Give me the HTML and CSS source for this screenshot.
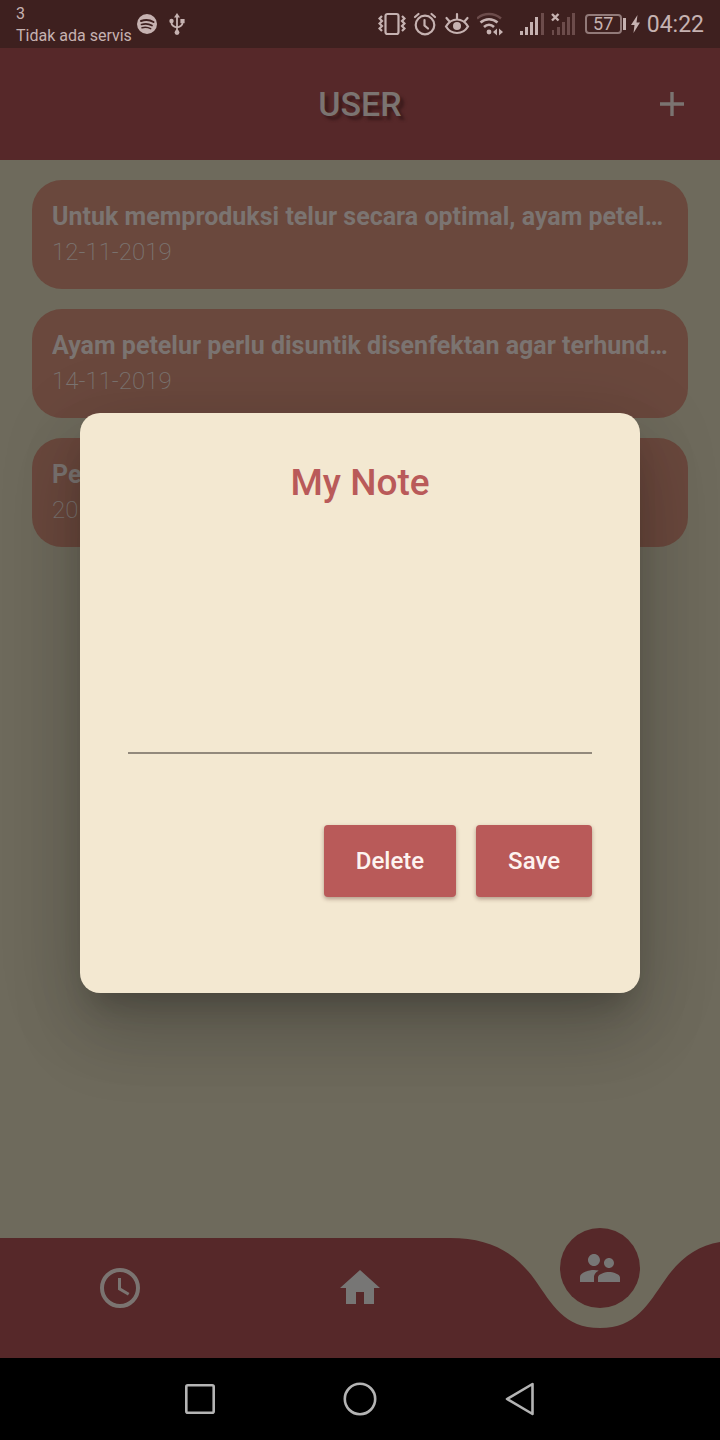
FILE: index.html
```html
<!DOCTYPE html>
<html lang="id">
<head>
<meta charset="utf-8">
<meta name="viewport" content="width=device-width, initial-scale=1">
<title>User</title>
<link rel="stylesheet" href="styles.css">
</head>
<body>
<div class="status">
  <div class="carrier"><span>3</span><span>Tidak ada servis</span></div>
  <svg class="spotify" width="20" height="20" viewBox="0 0 20 20"><circle cx="10" cy="10" r="10" fill="#c6b2b1"/><g fill="none" stroke="#3e201f" stroke-linecap="round"><path d="M4 7C8 5.700 13 6 16.500 8" stroke-width="2"/><path d="M4.500 10.500c3.500-1 7.500-.7 10.500 1.100" stroke-width="1.700"/><path d="M5 13.700c3-.8 6-.5 8.700 1" stroke-width="1.400"/></g></svg>
  <svg class="usb" width="16" height="24" viewBox="0 0 16 24"><g fill="none" stroke="#c6b2b1" stroke-width="1.800"><path d="M8 3v18M2.500 8v3q0 3 5.500 4.500M13.500 8v3q0 3-5.500 4.500"/></g><g fill="#c6b2b1"><path d="M8 1l3 4.500H5z"/><circle cx="2.500" cy="9" r="2.200"/><path d="M11.400 7h4.200v4.200h-4.200z"/><circle cx="8" cy="20.500" r="2.400"/></g></svg>
  <div class="indicators">
    <svg width="28" height="24" viewBox="0 0 28 24" fill="none" stroke="#c6b2b1"><rect x="7.500" y="2" width="13" height="20" rx="2" stroke-width="2.200"/><path d="M4 4L1.500 6.500 4 9 1.500 11.500 4 14 1.500 16.500 4 19M24 4l2.500 2.500L24 9l2.500 2.500L24 14l2.500 2.500L24 19" stroke-width="2.200"/></svg>
    <svg width="24" height="24" viewBox="0 0 24 24" fill="none" stroke="#c6b2b1" stroke-width="2.200" stroke-linecap="round"><circle cx="12" cy="13" r="9.300"/><path d="M2 5l3.500-3M22 5l-3.500-3M11.500 8v5.500l3.500 3"/></svg>
    <svg width="26" height="24" viewBox="0 0 26 24" fill="none" stroke="#c6b2b1" stroke-width="2.200" stroke-linecap="round"><path d="M2 14.500C5 9.500 9 7.500 13 7.500s8 2 11 7c-3 5-7 6.500-11 6.500S5 19.500 2 14.500zM13 7V2M5.500 9.500l-3-3.500M20.500 9.500l3-3.500"/><circle cx="13" cy="14" r="4" fill="#c6b2b1" stroke="none"/></svg>
    <svg width="28" height="24" viewBox="0 0 28 24" fill="none" stroke="#c6b2b1" stroke-width="2.500"><path d="M0 6.500C7 .6 17 .6 24 6.500" stroke="#6c4c4b"/><path d="M3.500 10.500c5-4.500 12-4.500 17 0M7 15c3-3 7-3 10 0"/><circle cx="12" cy="20" r="2.400" fill="#c6b2b1" stroke="none"/><path d="M16 20l4-3.500v7zM22 16.500l4 3.500-4 3.500z" fill="#c6b2b1" stroke="none"/></svg>
    <svg class="signal" width="24" height="24" viewBox="0 0 24 24" fill="#c6b2b1"><path d="M0 19h3v4H0zM5 15h3v8H5zM10 10h3v13h-3zM15 5h3v18h-3z"/><path d="M21 1h3v22h-3z" fill="#6c4c4b"/></svg>
    <svg width="24" height="24" viewBox="0 0 24 24"><path d="M1 18h2v5H1zM6 15h3v8H6zM11 10h3v13h-3zM16 5h3v18h-3zM21 1h3v22h-3z" fill="#6c4c4b"/><path d="M1 2l6.500 6.500M7.500 2L1 8.500" stroke="#c6b2b1" stroke-width="2.400"/></svg>
    <div class="battery"><span>57</span></div>
    <svg class="bolt" width="9" height="18" viewBox="0 0 9 18"><path d="M6.500 0L0 10h3.500L2.500 18 9 7.500H5.500z" fill="#c6b2b1"/></svg>
    <time>04:22</time>
  </div>
</div>

<div class="app">
  <header class="topbar">
    <h1>USER</h1>
    <button class="add" aria-label="Tambah"><svg width="24" height="24" viewBox="0 0 24 24"><path d="M0 12h24M12 0v24" stroke="#7b7471" stroke-width="3.400"/></svg></button>
  </header>
  <main class="notes">
    <article class="note"><h2>Untuk memproduksi telur secara optimal, ayam petel…</h2><p>12-11-2019</p></article>
    <article class="note"><h2>Ayam petelur perlu disuntik disenfektan agar terhund…</h2><p>14-11-2019</p></article>
    <article class="note"><h2>Pe</h2><p>20</p></article>
  </main>
  <nav class="tabs">
    <svg class="wave" viewBox="0 0 720 120" preserveAspectRatio="none"><path d="M0 0H450C490 0 515 14 535 42C552 66 564 90 600 90C636 90 648 66 665 42C680 20 697 8 720 4V120H0z" fill="#562829"/></svg>
    <button class="tab" aria-label="Riwayat"><svg width="48" height="48" viewBox="0 0 24 24" fill="none" stroke="#7b7471"><circle cx="12" cy="12" r="9" stroke-width="2"/><path d="M11.750 7v5.400l4.600 2.700" stroke-width="1.500"/></svg></button>
    <button class="tab" aria-label="Beranda"><svg width="48" height="48" viewBox="0 0 24 24" fill="#777675"><path d="M10 20v-6h4v6h5v-8h3L12 3 2 12h3v8z"/></svg></button>
    <button class="tab raised" aria-label="User"><span class="active"><svg width="48" height="48" viewBox="0 0 24 24" fill="#777675"><path d="M16.500 12c1.380 0 2.490-1.120 2.490-2.500S17.880 7 16.500 7C15.120 7 14 8.120 14 9.500s1.120 2.500 2.500 2.500zM9 11c1.660 0 2.990-1.340 2.990-3S10.660 5 9 5C7.340 5 6 6.340 6 8s1.340 3 3 3zm7.500 3c-1.830 0-5.500.92-5.500 2.750V19h11v-2.250c0-1.830-3.670-2.750-5.500-2.750zM9 13c-2.330 0-7 1.170-7 3.500V19h7v-2.250c0-.85.33-2.340 2.370-3.470C10.500 13.100 9.660 13 9 13z"/></svg></span></button>
  </nav>
  <div class="overlay">
    <form class="dialog" role="dialog" aria-labelledby="dialog-title">
      <h2 id="dialog-title">My Note</h2>
      <textarea aria-labelledby="dialog-title"></textarea>
      <div class="actions"><button type="button">Delete</button><button type="button">Save</button></div>
    </form>
  </div>
</div>

<div class="system">
  <button aria-label="Aplikasi terbaru"><svg width="36" height="36" viewBox="0 0 36 36" fill="none" stroke="#b4b4b4" stroke-width="2.600"><rect x="4.300" y="4.300" width="27.400" height="27.400" rx="1.500"/></svg></button>
  <button aria-label="Layar utama"><svg width="36" height="36" viewBox="0 0 36 36" fill="none" stroke="#b4b4b4" stroke-width="2.600"><circle cx="18" cy="18" r="15.200"/></svg></button>
  <button aria-label="Kembali"><svg width="36" height="36" viewBox="0 0 36 36" fill="none" stroke="#b4b4b4" stroke-width="2.600" stroke-linejoin="round"><path d="M30.500 3v30L5 18z"/></svg></button>
</div>
</body>
</html>
```
FILE: styles.css
```css
* { box-sizing: border-box; }
body {
  margin: 0;
  min-height: 100vh;
  display: flex;
  flex-direction: column;
  background: #6e6a5c;
  font-family: Roboto, "Liberation Sans", sans-serif;
}
h1, h2, p { margin: 0; }
svg { display: block; flex: none; }
button { border: 0; padding: 0; background: none; font-family: inherit; cursor: pointer; }

.status {
  height: 48px;
  padding: 0 16px;
  display: flex;
  align-items: center;
  background: #3e201f;
  color: #c6b2b1;
}
.carrier {
  padding-top: 2px;
  display: flex;
  flex-direction: column;
  font-size: 16px;
  line-height: 22px;
  white-space: nowrap;
}
.spotify { margin-left: 5px; }
.usb { margin-left: 12px; }
.indicators { margin-left: auto; display: flex; align-items: center; gap: 7px; }
.signal { margin-left: 8px; }
.battery {
  position: relative;
  width: 37px;
  height: 20px;
  margin-left: 3px;
  display: grid;
  place-items: center;
  border: 2px solid #927a79;
  border-radius: 4px;
  font-size: 18px;
  line-height: 16px;
}
.battery::after {
  content: "";
  position: absolute;
  right: -6px;
  top: 2px;
  width: 3px;
  height: 12px;
  background: #c6b2b1;
}
.bolt { margin-left: 2px; }
.indicators time { padding-top: 2px; font-size: 23px; line-height: 32px; }

.app {
  position: relative;
  flex: 1;
  display: flex;
  flex-direction: column;
}
.topbar {
  height: 112px;
  padding: 0 36px;
  display: grid;
  grid-template-columns: 1fr auto 1fr;
  align-items: center;
  background: #562829;
}
.topbar h1 {
  grid-column: 2;
  color: #7b7471;
  font-size: 34px;
  font-weight: 500;
  line-height: 40px;
  text-shadow: 4px 4px 3px #3c1b1c;
}
.add { justify-self: end; }

.notes {
  flex: 1;
  padding: 20px 32px;
  display: flex;
  flex-direction: column;
  gap: 20px;
}
.note {
  height: 109px;
  padding: 20px 4px 20px 20px;
  border-radius: 30px;
  background: #6a483d;
  color: #7b7471;
}
.note h2 {
  overflow: hidden;
  font-size: 25px;
  font-weight: 700;
  line-height: 34px;
  text-overflow: ellipsis;
  white-space: nowrap;
}
.note p { font-size: 24px; font-weight: 200; line-height: 36px; }

.tabs {
  position: relative;
  height: 120px;
  display: grid;
  grid-template-columns: repeat(3, 1fr);
}
.wave { position: absolute; inset: 0; width: 100%; height: 100%; }
.tab {
  position: relative;
  height: 100px;
  display: grid;
  place-items: center;
}
.raised { height: 80px; margin-top: -10px; }
.active {
  width: 80px;
  height: 80px;
  display: grid;
  place-items: center;
  border-radius: 50%;
  background: #562829;
}

.overlay {
  position: absolute;
  inset: 0;
  padding: 0 80px;
  display: grid;
  align-items: center;
}
.dialog {
  padding: 48px 48px 96px;
  border-radius: 20px;
  background: #f3e8d1;
  box-shadow: 0 22px 30px -14px rgba(0, 0, 0, .2), 0 44px 70px 4px rgba(0, 0, 0, .12), 0 16px 80px 8px rgba(0, 0, 0, .12);
}
.dialog h2 {
  color: #b95a59;
  font-size: 37px;
  font-weight: 500;
  line-height: 44px;
  text-align: center;
}
.dialog textarea {
  display: block;
  width: 100%;
  height: 200px;
  margin-top: 49px;
  padding: 8px 0;
  border: 0;
  border-bottom: 2px solid #92897c;
  outline: 0;
  resize: none;
  background: transparent;
  color: #333;
  font: 24px/32px Roboto, sans-serif;
}
.actions {
  margin-top: 71px;
  display: flex;
  justify-content: flex-end;
  gap: 20px;
}
.actions button {
  height: 72px;
  padding: 0 32px;
  border-radius: 4px;
  background: #b95a59;
  box-shadow: 0 2px 4px rgba(80, 40, 30, .4);
  color: #fdf3f0;
  font-size: 24px;
  font-weight: 500;
}

.system {
  height: 82px;
  padding: 0 80px;
  display: grid;
  grid-template-columns: repeat(3, 160px);
  justify-content: center;
  place-items: center;
  background: #000;
}
```
